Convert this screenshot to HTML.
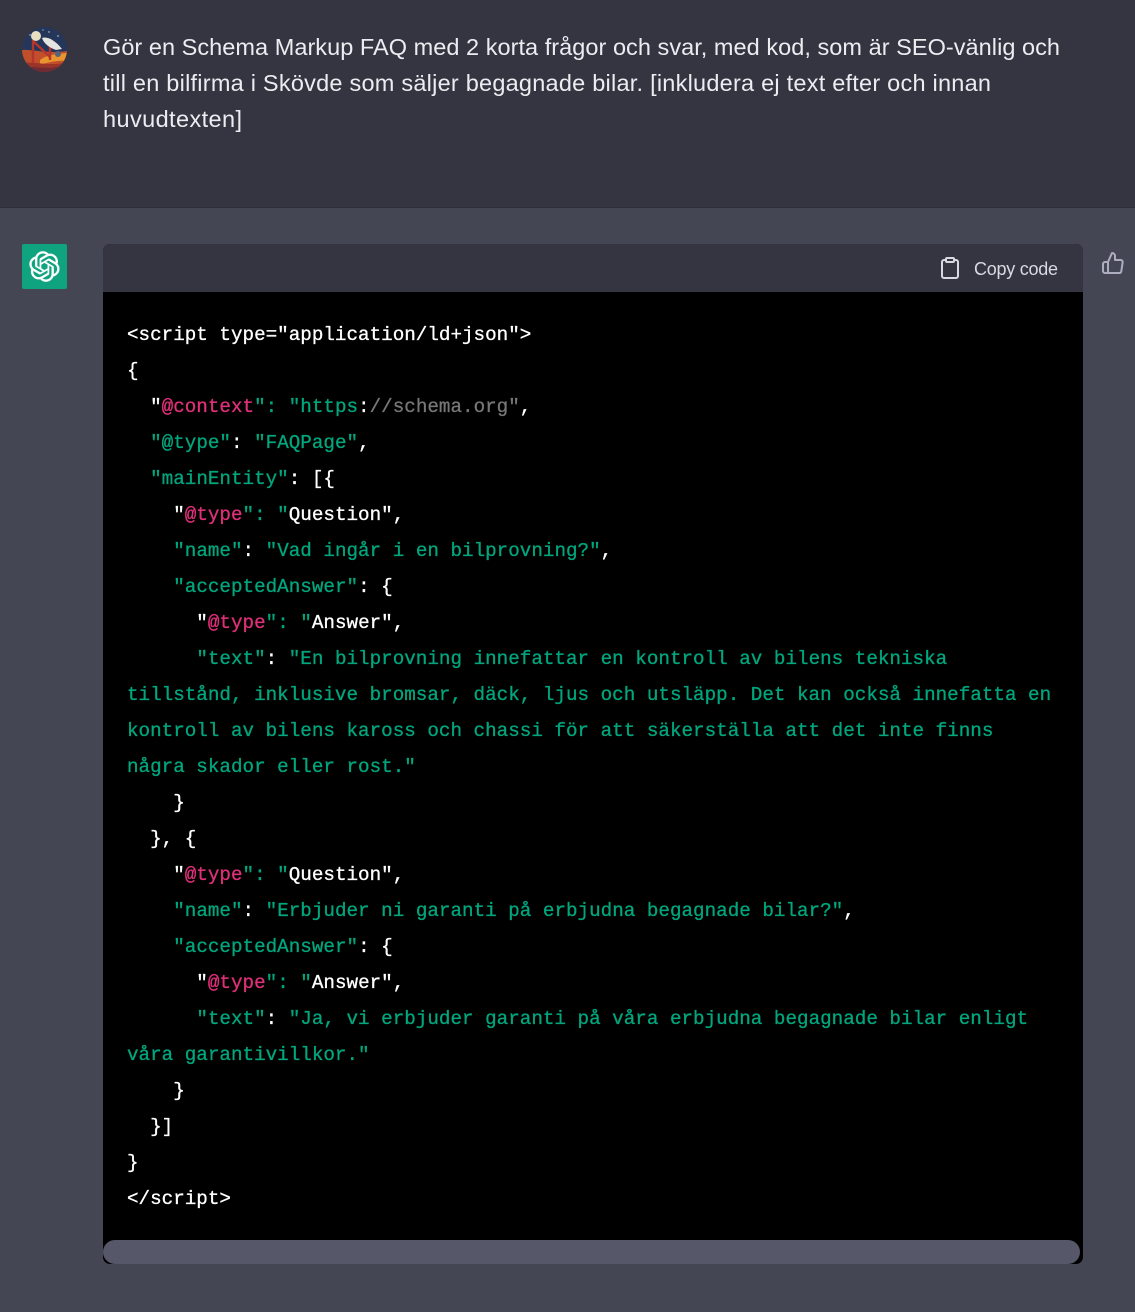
<!DOCTYPE html>
<html lang="sv">
<head>
<meta charset="utf-8">
<title>Schema Markup FAQ</title>
<style>
html,body{margin:0;padding:0;background:#444654;}
body{position:relative;width:1135px;height:1312px;overflow:hidden;font-family:"Liberation Sans",sans-serif;}
.user{position:absolute;left:0;top:0;width:1135px;height:207px;background:#343541;border-bottom:1px solid #2d2e36;}
.abs{position:absolute;display:block;}
.codebox{position:absolute;left:103px;top:244px;width:980px;height:1020px;border-radius:7px;overflow:hidden;background:#000;}
.head{position:absolute;left:0;top:0;width:980px;height:48px;background:#343541;}
.thumb{position:absolute;left:0;top:996px;width:977px;height:24px;background:#565869;border-radius:12px;}
pre{position:absolute;left:127px;top:317px;margin:0;font-family:"Liberation Mono",monospace;font-size:19.25px;line-height:36px;color:#fff;white-space:pre;-webkit-text-stroke:.3px currentColor;}
.g{color:#00a67d}.p{color:#df3079}.c{color:#777}
</style>
</head>
<body>
<div class="user"></div>

<svg class="abs" style="left:22px;top:27px" width="45" height="45" viewBox="0 0 45 45">
<defs><clipPath id="cp"><circle cx="22.5" cy="22.5" r="22.5"/></clipPath></defs>
<g clip-path="url(#cp)">
<rect width="45" height="45" fill="#24365a"/>
<path d="M0 23C10 22 24 27 45 24V45H0Z" fill="#c14f2b"/>
<path d="M18 33C26 27 36 27 45 26V34C36 33 26 35 18 38Z" fill="#e8952f"/>
<path d="M0 36C14 34 28 40 45 35V45H0Z" fill="#9a3328"/>
<path d="M8 40C18 40 30 43 42 38L38 45H12Z" fill="#6f2a34"/>
<path d="M11 13V36M28 16V33M11 14L28 30" stroke="#b5342c" stroke-width="2.4" fill="none"/>
<circle cx="14" cy="9" r="5" fill="#e8dfc0"/>
<path d="M20 11C25 9 33 13 40 22L34 23C28 21 22 17 20 11Z" fill="#e4e4e0"/>
<circle cx="36" cy="27" r="3" fill="#56647a"/>
<circle cx="8" cy="8" r=".7" fill="#dde"/><circle cx="27" cy="5" r=".7" fill="#dde"/><circle cx="36" cy="9" r=".7" fill="#dde"/><circle cx="21" cy="3" r=".6" fill="#dde"/>
</g>
</svg>

<svg class="abs" style="left:0;top:0" width="1135" height="140" viewBox="0 0 1135 140">
<g font-family="'Liberation Sans',sans-serif" font-size="23.5" fill="#ececf1">
<text x="103" y="55" textLength="957" lengthAdjust="spacing">Gör en Schema Markup FAQ med 2 korta frågor och svar, med kod, som är SEO-vänlig och</text>
<text x="103" y="91" textLength="888" lengthAdjust="spacing">till en bilfirma i Skövde som säljer begagnade bilar. [inkludera ej text efter och innan</text>
<text x="103" y="127" textLength="139" lengthAdjust="spacing">huvudtexten]</text>
</g>
</svg>

<div class="abs" style="left:22px;top:244px;width:45px;height:45px;background:#10a37f;border-radius:2px"></div>
<svg class="abs" style="left:29px;top:251px" width="31" height="31" viewBox="0 0 41 41">
<path fill="#fff" stroke="#fff" stroke-width=".5" d="M37.5324 16.8707C37.9808 15.5241 38.1363 14.0974 37.9886 12.6859C37.8409 11.2744 37.3934 9.91076 36.676 8.68622C35.6126 6.83404 33.9882 5.3676 32.0373 4.4985C30.0864 3.62941 27.9098 3.40259 25.8215 3.85078C24.8796 2.7893 23.7219 1.94125 22.4257 1.36341C21.1295 0.785575 19.7249 0.491269 18.3058 0.500197C16.1708 0.495044 14.0893 1.16803 12.3614 2.42214C10.6335 3.67624 9.34853 5.44666 8.6917 7.47815C7.30085 7.76286 5.98686 8.3414 4.8377 9.17505C3.68854 10.0087 2.73073 11.0782 2.02839 12.312C0.956464 14.1591 0.498905 16.2988 0.721698 18.4228C0.944492 20.5467 1.83612 22.5449 3.268 24.1293C2.81966 25.4759 2.66413 26.9026 2.81182 28.3141C2.95951 29.7256 3.40701 31.0892 4.12437 32.3138C5.18791 34.1659 6.8123 35.6322 8.76321 36.5013C10.7141 37.3704 12.8907 37.5973 14.9789 37.1492C15.9208 38.2107 17.0786 39.0587 18.3747 39.6366C19.6709 40.2144 21.0755 40.5087 22.4946 40.4998C24.6307 40.5054 26.7133 39.8321 28.4418 38.5772C30.1704 37.3223 31.4556 35.5506 32.1119 33.5179C33.5027 33.2332 34.8167 32.6547 35.9659 31.821C37.115 30.9874 38.0728 29.9178 38.7752 28.684C39.8458 26.8371 40.3023 24.6979 40.0789 22.5748C39.8556 20.4517 38.9639 18.4544 37.5324 16.8707ZM22.4978 37.8849C20.7443 37.8874 19.0459 37.2733 17.6994 36.1501C17.7601 36.117 17.8666 36.0586 17.936 36.0161L25.9004 31.4156C26.1003 31.3019 26.2663 31.137 26.3813 30.9378C26.4964 30.7386 26.5563 30.5124 26.5549 30.2825V19.0542L29.9213 20.998C29.9389 21.0068 29.9541 21.0198 29.9656 21.0359C29.977 21.052 29.9842 21.0707 29.9867 21.0902V30.3889C29.9842 32.375 29.1946 34.2791 27.7909 35.6841C26.3872 37.0892 24.4838 37.8806 22.4978 37.8849ZM6.39227 31.0064C5.51397 29.4888 5.19742 27.7107 5.49804 25.9832C5.55718 26.0187 5.66048 26.0818 5.73461 26.1244L13.699 30.7248C13.8975 30.8408 14.1233 30.902 14.3532 30.902C14.583 30.902 14.8088 30.8408 15.0073 30.7248L24.731 25.1103V28.9979C24.7321 29.0177 24.7283 29.0376 24.7199 29.0556C24.7115 29.0736 24.6988 29.0893 24.6829 29.1012L16.6317 33.7497C14.9096 34.7416 12.8643 35.0097 10.9447 34.4954C9.02506 33.9811 7.38785 32.7263 6.39227 31.0064ZM4.29707 13.6194C5.17156 12.0998 6.55279 10.9364 8.19885 10.3327C8.19885 10.4013 8.19491 10.5228 8.19491 10.6071V19.808C8.19351 20.0378 8.25334 20.2638 8.36823 20.4629C8.48312 20.6619 8.64893 20.8267 8.84863 20.9404L18.5723 26.5542L15.206 28.4979C15.1894 28.5089 15.1703 28.5155 15.1505 28.5173C15.1307 28.5191 15.1107 28.516 15.0924 28.5082L7.04046 23.8557C5.32135 22.8601 4.06716 21.2235 3.55289 19.3046C3.03862 17.3858 3.30624 15.3413 4.29707 13.6194ZM31.955 20.0556L22.2312 14.4411L25.5976 12.4981C25.6142 12.4872 25.6333 12.4805 25.6531 12.4787C25.6729 12.4769 25.6928 12.4801 25.7111 12.4879L33.7631 17.1364C34.9967 17.849 36.0017 18.8982 36.6606 20.1613C37.3194 21.4244 37.6047 22.849 37.4832 24.2684C37.3617 25.6878 36.8382 27.0432 35.9743 28.1759C35.1103 29.3086 33.9415 30.1717 32.6047 30.6641C32.6047 30.5947 32.6047 30.4733 32.6047 30.3889V21.188C32.6066 20.9586 32.5474 20.7328 32.4332 20.5338C32.319 20.3348 32.154 20.1698 31.955 20.0556ZM35.3055 15.0128C35.2464 14.9765 35.1431 14.9142 35.069 14.8717L27.1045 10.2712C26.906 10.1554 26.6803 10.0943 26.4504 10.0943C26.2206 10.0943 25.9948 10.1554 25.7963 10.2712L16.0726 15.8858V11.9982C16.0715 11.9783 16.0753 11.9585 16.0837 11.9405C16.0921 11.9225 16.1048 11.9068 16.1207 11.8949L24.1719 7.25025C25.4053 6.53903 26.8158 6.19376 28.2383 6.25482C29.6608 6.31589 31.0364 6.78077 32.2044 7.59508C33.3723 8.40939 34.2842 9.53945 34.8334 10.8531C35.3826 12.1667 35.5464 13.6095 35.3055 15.0128ZM14.2424 21.9419L10.8752 19.9981C10.8576 19.9893 10.8423 19.9763 10.8309 19.9602C10.8195 19.9441 10.8122 19.9254 10.8098 19.9058V10.6071C10.8107 9.18295 11.2173 7.78848 11.9819 6.58696C12.7466 5.38544 13.8377 4.42659 15.1275 3.82264C16.4173 3.21869 17.8524 2.99464 19.2649 3.1767C20.6775 3.35876 22.0089 3.93941 23.1034 4.85067C23.0427 4.88379 22.937 4.94215 22.8668 4.98473L14.9024 9.58517C14.7025 9.69878 14.5366 9.86356 14.4215 10.0626C14.3065 10.2616 14.2466 10.4877 14.2479 10.7175L14.2424 21.9419ZM16.071 17.9991L20.4018 15.4978L24.7325 17.9975V22.9985L20.4018 25.4983L16.071 22.9985V17.9991Z"/>
</svg>

<div class="codebox">
<div class="head"></div>
<div class="thumb"></div>
</div>

<svg class="abs" style="left:938px;top:256px" width="24" height="24" viewBox="0 0 24 24" fill="none" stroke="#d9d9e3" stroke-width="2" stroke-linecap="round" stroke-linejoin="round">
<path d="M16 4h2a2 2 0 0 1 2 2v14a2 2 0 0 1-2 2H6a2 2 0 0 1-2-2V6a2 2 0 0 1 2-2h2"/>
<rect x="8" y="2" width="8" height="4" rx="1" ry="1"/>
</svg>
<svg class="abs" style="left:970px;top:255px" width="100" height="30" viewBox="0 0 100 30">
<text x="4" y="20" font-family="'Liberation Sans',sans-serif" font-size="18" fill="#d9d9e3" textLength="84" lengthAdjust="spacing">Copy code</text>
</svg>
<svg class="abs" style="left:1101px;top:251px" width="24" height="24" viewBox="0 0 24 24" fill="none" stroke="#acacbe" stroke-width="2" stroke-linecap="round" stroke-linejoin="round">
<path d="M14 9V5a3 3 0 0 0-3-3l-4 9v11h11.28a2 2 0 0 0 2-1.7l1.38-9a2 2 0 0 0-2-2.3zM7 22H4a2 2 0 0 1-2-2v-7a2 2 0 0 1 2-2h3"/>
</svg>

<pre>&lt;script type="application/ld+json"&gt;
{
  "<span class="p">@context</span><span class="g">": "https</span>:<span class="c">//schema.org"</span>,
  <span class="g">"@type"</span>: <span class="g">"FAQPage"</span>,
  <span class="g">"mainEntity"</span>: [{
    "<span class="p">@type</span><span class="g">": "</span>Question",
    <span class="g">"name"</span>: <span class="g">"Vad ingår i en bilprovning?"</span>,
    <span class="g">"acceptedAnswer"</span>: {
      "<span class="p">@type</span><span class="g">": "</span>Answer",
      <span class="g">"text"</span>: <span class="g">"En bilprovning innefattar en kontroll av bilens tekniska</span>
<span class="g">tillstånd, inklusive bromsar, däck, ljus och utsläpp. Det kan också innefatta en</span>
<span class="g">kontroll av bilens kaross och chassi för att säkerställa att det inte finns</span>
<span class="g">några skador eller rost."</span>
    }
  }, {
    "<span class="p">@type</span><span class="g">": "</span>Question",
    <span class="g">"name"</span>: <span class="g">"Erbjuder ni garanti på erbjudna begagnade bilar?"</span>,
    <span class="g">"acceptedAnswer"</span>: {
      "<span class="p">@type</span><span class="g">": "</span>Answer",
      <span class="g">"text"</span>: <span class="g">"Ja, vi erbjuder garanti på våra erbjudna begagnade bilar enligt</span>
<span class="g">våra garantivillkor."</span>
    }
  }]
}
&lt;/script&gt;</pre>
</body>
</html>
